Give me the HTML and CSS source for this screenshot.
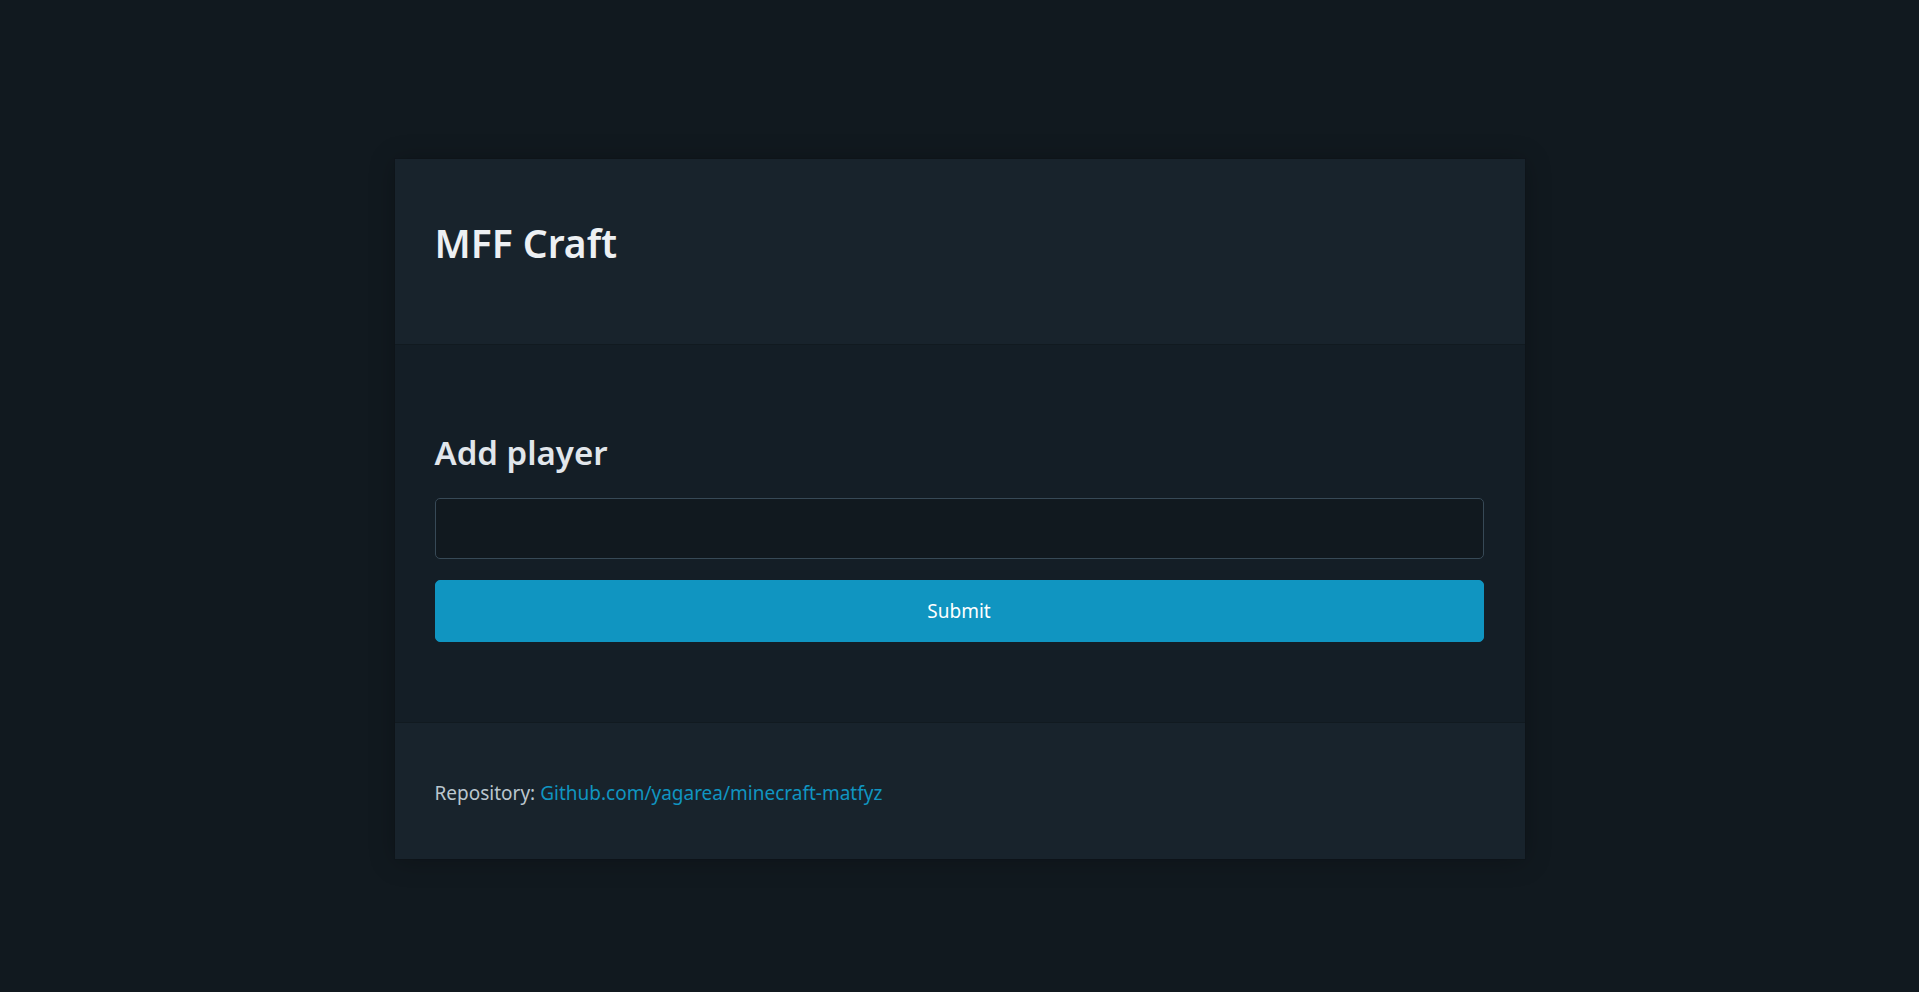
FILE: index.html
```html
<!DOCTYPE html>
<html lang="en">
<head>
<meta charset="utf-8">
<title>MFF Craft</title>
<link rel="stylesheet" href="styles.css">
</head>
<body>
<main class="container">
  <article class="card">
    <header class="card-header">
      <h1 class="title">MFF Craft</h1>
    </header>
    <section class="card-body">
      <h2 class="subtitle">Add player</h2>
      <form class="form">
        <input class="text-input" type="text" name="player">
        <button class="submit" type="submit">Submit</button>
      </form>
    </section>
    <footer class="card-footer">
      <span class="repo-label">Repository:</span> <a class="repo-link" href="#">Github.com/yagarea/minecraft-matfyz</a>
    </footer>
  </article>
</main>
</body>
</html>
```

FILE: styles.css
```css
html, body {
  margin: 0;
  padding: 0;
}
body {
  background: #11191f;
  color: #bbc6ce;
  font-family: "Noto Sans", "Open Sans", sans-serif;
  font-size: 20px;
  min-height: 992px;
}
.container {
  width: 1130px;
  margin: 0 auto;
  padding-top: 159px;
}
.card {
  background: #141e26;
  box-shadow: 0 0.1rem 1.5rem rgba(0, 0, 0, 0.25), 0 0 0 1px rgba(0, 0, 0, 0.06);
  display: flex;
  flex-direction: column;
}
.card-header {
  background: #18232c;
  height: 186px;
  box-sizing: border-box;
  padding: 62px 40px 0;
  border-bottom: 1px solid #111a20;
}
.title {
  margin: 0;
  font-size: 39px;
  line-height: 44px;
  font-weight: 600;
  color: #edf0f3;
}
.card-body {
  padding: 88px 41px 0 40px;
  height: 377px;
  box-sizing: border-box;
}
.subtitle {
  margin: 0 0 25px;
  font-size: 33px;
  line-height: 40px;
  font-weight: 600;
  color: #e1e6eb;
}
.form {
  display: flex;
  flex-direction: column;
  gap: 21px;
}
.text-input {
  display: block;
  box-sizing: border-box;
  width: 100%;
  height: 61px;
  margin: 0;
  background: #11191f;
  border: 1px solid #374956;
  border-radius: 5px;
  color: #e1e6eb;
  font: inherit;
  padding: 0 20px;
  outline: none;
}
.submit {
  display: block;
  box-sizing: border-box;
  width: 100%;
  height: 62px;
  margin: 0;
  background: #1095c1;
  border: 1px solid #1095c1;
  border-radius: 5px;
  color: #ffffff;
  font-family: inherit;
  font-size: 19px;
  line-height: 30px;
  cursor: pointer;
}
.card-footer {
  background: #18232c;
  border-top: 1px solid #111a20;
  height: 137px;
  box-sizing: border-box;
  padding: 55px 40px 0 40px;
  font-size: 19px;
  line-height: 30px;
}
.repo-label {
  color: #bbc6ce;
}
.repo-link {
  color: #1095c1;
  text-decoration: none;
}
```
